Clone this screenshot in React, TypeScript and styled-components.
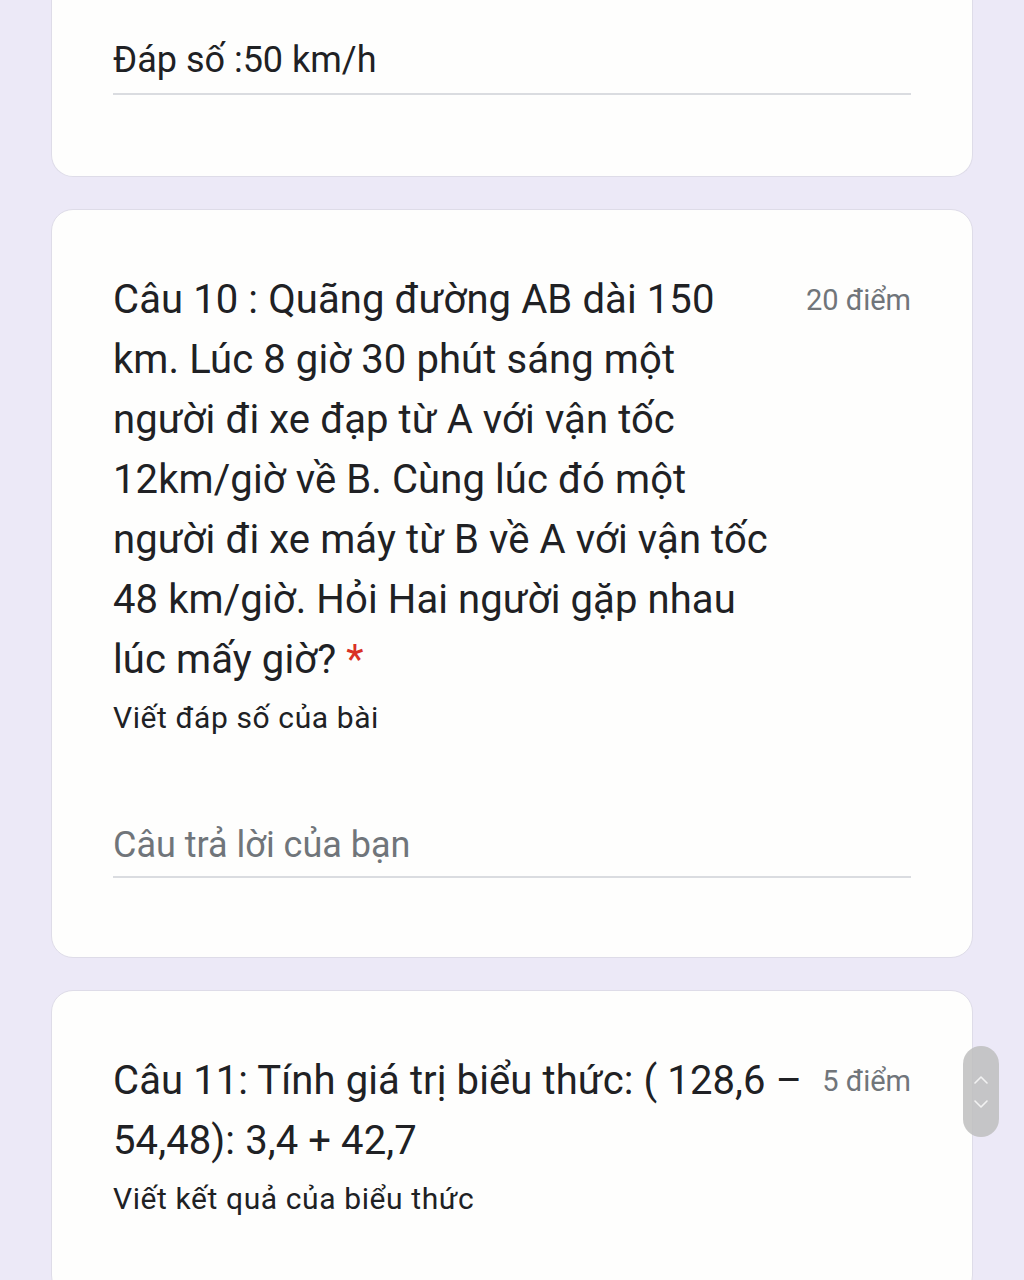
import React from 'react';
import styled, { createGlobalStyle } from 'styled-components';

const GlobalStyle = createGlobalStyle`
  html, body {
    margin: 0;
    padding: 0;
    background: #ece9f7;
  }
  body {
    font-family: Roboto, "Noto Sans", Arial, sans-serif;
    color: #202124;
  }
`;

const Page = styled.div`
  display: flex;
  flex-direction: column;
  gap: 32px;
  padding: 0 51px;
  height: 1280px;
  overflow: hidden;
`;

const Card = styled.section<{ $top?: boolean }>`
  background: #fefefd;
  border: 1px solid #dedce8;
  border-radius: 22px;
  padding: ${({ $top }) => ($top ? '38px 61px 81px' : '60px 61px 79px')};
  ${({ $top }) => $top && 'border-top: none; border-top-left-radius: 0; border-top-right-radius: 0;'}
  flex-shrink: 0;
`;

const Header = styled.div`
  display: flex;
  justify-content: space-between;
  align-items: flex-start;
  gap: 16px;
`;

const Question = styled.div`
  font-size: 40px;
  line-height: 60px;
  white-space: nowrap;
  letter-spacing: 0.1px;
`;

const Star = styled.span`
  color: #d93025;
  margin-left: 10px;
`;

const Points = styled.div`
  font-size: 29px;
  line-height: 60px;
  color: #70757a;
  white-space: nowrap;
`;

const Description = styled.div`
  margin-top: 10px;
  font-size: 30px;
  line-height: 36px;
  letter-spacing: 0.6px;
`;

const Field = styled.div<{ $placeholder?: boolean }>`
  margin-top: ${({ $placeholder }) => ($placeholder ? '87px' : '0')};
  font-size: 36px;
  line-height: 44px;
  padding-bottom: ${({ $placeholder }) => ($placeholder ? '9px' : '11px')};
  border-bottom: 2px solid #dadce0;
  color: ${({ $placeholder }) => ($placeholder ? '#70757a' : '#202124')};
`;

const ScrollPill = styled.div`
  position: fixed;
  left: 963px;
  top: 1046px;
  width: 36px;
  height: 91px;
  border-radius: 18px;
  background: rgba(190, 190, 190, 0.85);
  display: flex;
  flex-direction: column;
  align-items: center;
  justify-content: center;
  gap: 14px;
`;

const Chevron = ({ up }: { up?: boolean }) => (
  <svg width="16" height="10" viewBox="0 0 16 10" fill="none">
    <path
      d={up ? 'M2 8 L8 2 L14 8' : 'M2 2 L8 8 L14 2'}
      stroke="#f2f2f2"
      strokeWidth="1.6"
      strokeLinecap="round"
      strokeLinejoin="round"
    />
  </svg>
);

export default function App() {
  return (
    <>
      <GlobalStyle />
      <Page>
        <Card $top>
          <Field>Đáp số :50 km/h</Field>
        </Card>

        <Card>
          <Header>
            <Question>
              Câu 10 : Quãng đường AB dài 150
              <br />
              km. Lúc 8 giờ 30 phút sáng một
              <br />
              người đi xe đạp từ A với vận tốc
              <br />
              12km/giờ về B. Cùng lúc đó một
              <br />
              người đi xe máy từ B về A với vận tốc
              <br />
              48 km/giờ. Hỏi Hai người gặp nhau
              <br />
              lúc mấy giờ?<Star>*</Star>
            </Question>
            <Points>20 điểm</Points>
          </Header>
          <Description>Viết đáp số của bài</Description>
          <Field $placeholder>Câu trả lời của bạn</Field>
        </Card>

        <Card>
          <Header>
            <Question>
              Câu 11: Tính giá trị biểu thức: ( 128,6 –
              <br />
              54,48): 3,4 + 42,7
            </Question>
            <Points>5 điểm</Points>
          </Header>
          <Description>Viết kết quả của biểu thức</Description>
        </Card>
      </Page>
      <ScrollPill>
        <Chevron up />
        <Chevron />
      </ScrollPill>
    </>
  );
}
